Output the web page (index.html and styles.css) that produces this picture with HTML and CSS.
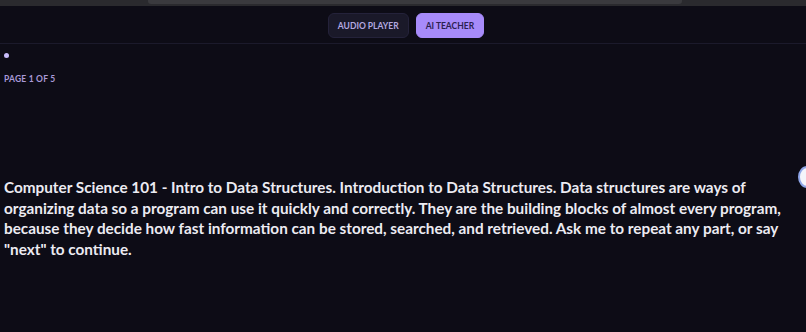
FILE: index.html
```html
<!DOCTYPE html>
<html lang="en">
	<head>
		<meta charset="UTF-8" />
		<meta name="viewport" content="width=device-width, initial-scale=1.0" />
		<title>AI Teacher</title>
		<link rel="stylesheet" href="styles.css">
	</head>
	<body>
		<div class="top-strip">
			<div class="top-tab"></div>
		</div>
		<header class="mode-bar">
			<button class="mode-btn" type="button">Audio Player</button>
			<button class="mode-btn active" type="button">AI Teacher</button>
		</header>
		<main class="lesson">
			<div class="dot"></div>
			<p class="page-label">Page 1 of 5</p>
			<p class="lesson-text">Computer Science 101 - Intro to Data Structures. Introduction to Data Structures. Data structures are ways of organizing data so a program can use it quickly and correctly. They are the building blocks of almost every program, because they decide how fast information can be stored, searched, and retrieved. Ask me to repeat any part, or say "next" to continue.</p>
		</main>
		<div class="side-knob"></div>
	</body>
</html>
```

FILE: styles.css
```css
html, body {
	margin: 0;
	padding: 0;
	background: #0d0c16;
	height: 100%;
	overflow: hidden;
	font-family: Lato, "Open Sans", sans-serif;
}
.top-strip {
	height: 6px;
	background: #2a2a2e;
	display: flex;
	justify-content: flex-start;
}
.top-tab {
	margin-left: 148px;
	width: 534px;
	height: 4px;
	background: #3a3a3e;
	border-radius: 0 0 3px 3px;
}
.mode-bar {
	display: flex;
	justify-content: center;
	gap: 7px;
	padding: 7px 0 5px 6px;
	border-bottom: 1px solid #1b1a2b;
}
.mode-btn {
	font-family: inherit;
	font-size: 8.5px;
	font-weight: 700;
	text-transform: uppercase;
	letter-spacing: 0;
	height: 25px;
	padding: 0 9px;
	border-radius: 6px;
	border: 1px solid #24223a;
	background: #1a1929;
	color: #b3a9e0;
}
.mode-btn.active {
	background: #a78bfa;
	border-color: #a78bfa;
	color: #2c2150;
}
.lesson {
	padding: 0 4px;
}
.dot {
	width: 5px;
	height: 5px;
	border-radius: 50%;
	background: #c9bdfb;
	margin: 9px 0 0 0;
}
.page-label {
	margin: 16px 0 0;
	font-size: 8.5px;
	font-weight: 700;
	letter-spacing: 0.2px;
	text-transform: uppercase;
	color: #a99ad8;
}
.lesson-text {
	margin: 93px 0 0;
	font-size: 15.3px;
	line-height: 20.5px;
	font-weight: 700;
	color: #ecebf2;
}
.side-knob {
	position: absolute;
	left: 798px;
	top: 166px;
	width: 18px;
	height: 22px;
	border-radius: 50%;
	background: #f4f5fb;
	border: 2px solid #8fa6e8;
	box-sizing: border-box;
}
```
